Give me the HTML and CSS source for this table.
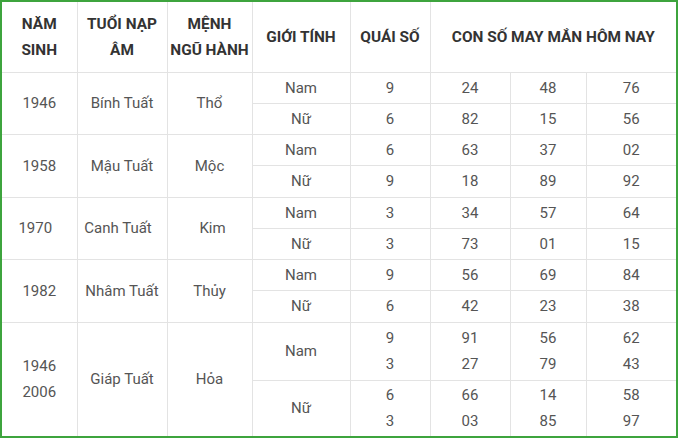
FILE: index.html
```html
<!DOCTYPE html>
<html lang="vi">
<head>
<meta charset="utf-8">
<link rel="stylesheet" href="styles.css">
</head>
<body>
<div class="frame">
<table class="tbl">
<colgroup>
<col class="c1"><col class="c2"><col class="c3"><col class="c4"><col class="c5"><col class="c6"><col class="c7"><col class="c8">
</colgroup>
<thead>
<tr class="head">
<th>NĂM<br>SINH</th>
<th>TUỔI NẠP<br>ÂM</th>
<th>MỆNH<br>NGŨ HÀNH</th>
<th>GIỚI TÍNH</th>
<th>QUÁI SỐ</th>
<th colspan="3">CON SỐ MAY MẮN HÔM NAY</th>
</tr>
</thead>
<tbody>
<tr class="r"><td rowspan="2">1946</td><td rowspan="2">Bính Tuất</td><td rowspan="2">Thổ</td><td>Nam</td><td>9</td><td>24</td><td>48</td><td>76</td></tr>
<tr class="r"><td>Nữ</td><td>6</td><td>82</td><td>15</td><td>56</td></tr>
<tr class="r"><td rowspan="2">1958</td><td rowspan="2">Mậu Tuất</td><td rowspan="2">Mộc</td><td>Nam</td><td>6</td><td>63</td><td>37</td><td>02</td></tr>
<tr class="r"><td>Nữ</td><td>9</td><td>18</td><td>89</td><td>92</td></tr>
<tr class="r"><td rowspan="2" class="shl">1970</td><td rowspan="2" class="shl">Canh Tuất</td><td rowspan="2" class="shr">Kim</td><td>Nam</td><td>3</td><td>34</td><td>57</td><td>64</td></tr>
<tr class="r"><td>Nữ</td><td>3</td><td>73</td><td>01</td><td>15</td></tr>
<tr class="r"><td rowspan="2">1982</td><td rowspan="2">Nhâm Tuất</td><td rowspan="2">Thủy</td><td>Nam</td><td>9</td><td>56</td><td>69</td><td>84</td></tr>
<tr class="r"><td>Nữ</td><td>6</td><td>42</td><td>23</td><td>38</td></tr>
<tr class="rr"><td rowspan="2" class="stack">1946<br>2006</td><td rowspan="2">Giáp Tuất</td><td rowspan="2">Hỏa</td><td>Nam</td><td class="stack">9<br>3</td><td class="stack">91<br>27</td><td class="stack">56<br>79</td><td class="stack">62<br>43</td></tr>
<tr class="rr2"><td>Nữ</td><td class="stack">6<br>3</td><td class="stack">66<br>03</td><td class="stack">14<br>85</td><td class="stack">58<br>97</td></tr>
</tbody>
</table>
</div>
</body>
</html>
```
FILE: styles.css
```css
html, body {
  margin: 0;
  padding: 0;
  background: #ffffff;
}
.frame {
  width: 674px;
  height: 434px;
  border: 2px solid #3da43d;
  overflow: hidden;
  background: #fff;
}
.tbl {
  width: 674px;
  border-collapse: collapse;
  table-layout: fixed;
  font-family: Roboto, "Noto Sans", sans-serif;
  color: #555;
  font-size: 15px;
}
.c1 { width: 75px; }
.c2 { width: 90px; }
.c3 { width: 85px; }
.c4 { width: 98px; }
.c5 { width: 80px; }
.c6 { width: 80px; }
.c7 { width: 76px; }
.c8 { width: 90px; }
.tbl th, .tbl td {
  border: 1px solid #e3e3e3;
  text-align: center;
  vertical-align: middle;
  padding: 0;
}
.tbl tr:first-child th { border-top: none; }
.tbl th:first-child, .tbl td:first-child { border-left: none; }
.tbl th:last-child, .tbl td:last-child { border-right: none; }
.tbl tbody tr:last-child td { border-bottom: none; }
.tbl tbody tr.rr2 td:first-child { border-left: 1px solid #e3e3e3; }
.head { height: 70px; }
.head th {
  font-weight: 700;
  color: #333;
  font-size: 15.4px;
  line-height: 26px;
}
.r { height: 31.25px; }
.r td { line-height: 20px; }
.rr { height: 58px; }
.rr2 { height: 56px; }
.stack {
  line-height: 26px;
}
.shl { padding-right: 8px !important; }
.shr { padding-left: 6px !important; }
```
